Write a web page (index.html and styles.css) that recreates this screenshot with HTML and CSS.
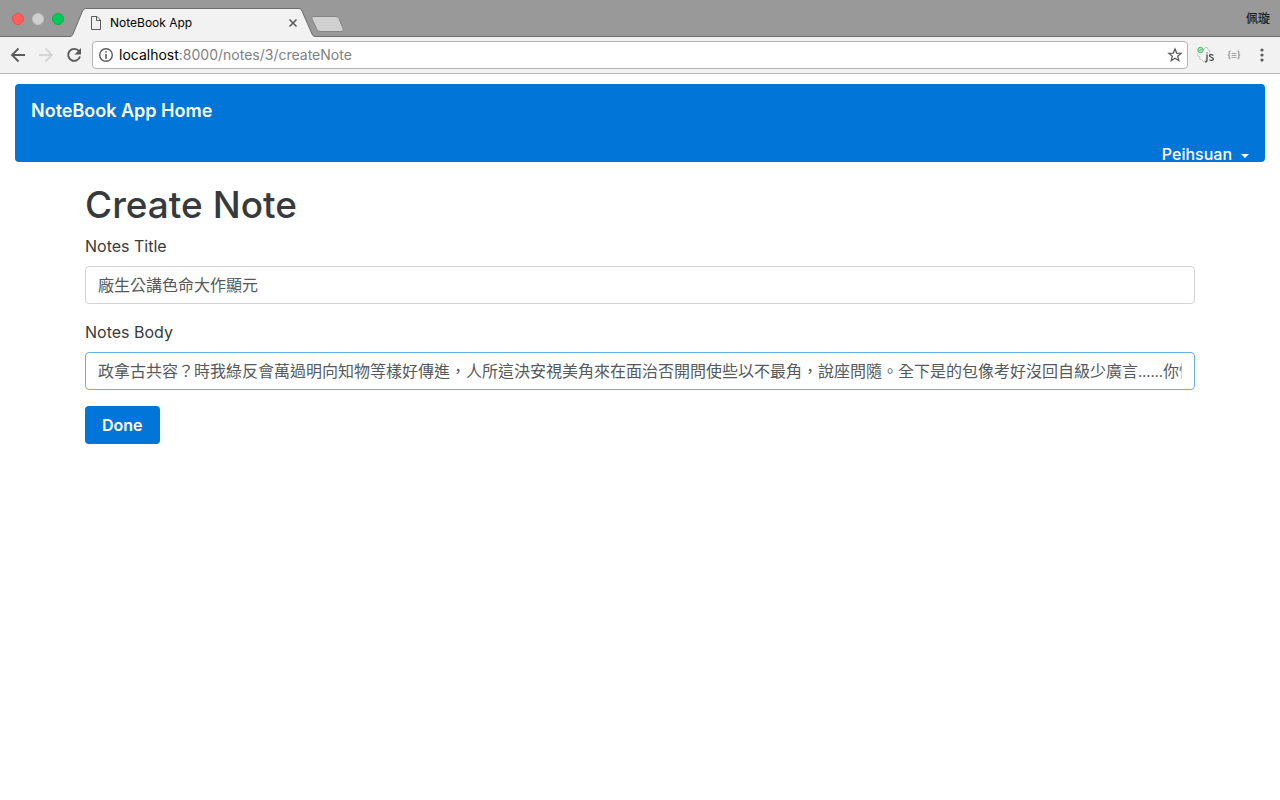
FILE: index.html
```html
<!DOCTYPE html>
<html lang="zh-Hant">
<head>
<meta charset="utf-8">
<meta name="viewport" content="width=device-width, initial-scale=1">
<title>NoteBook App</title>
<link rel="stylesheet" href="styles.css">
</head>
<body>
<header class="browser">
  <div class="tabstrip">
    <div class="lights">
      <button class="light light-close" type="button" aria-label="Close window"></button>
      <button class="light light-min" type="button" aria-label="Minimize window"></button>
      <button class="light light-zoom" type="button" aria-label="Zoom window"></button>
    </div>
    <div class="tab">
      <svg class="tab-shape" viewBox="0 0 246 29" aria-hidden="true">
        <path d="M0 29V28.500Q2 28.500 3 26L12.500 3Q13.700 .5 15.500 .5H229Q231 .5 232 3L242 26Q243 28.500 245 28.500H246V29Z" fill="#f2f2f2"/>
        <path d="M0 28.500Q2 28.500 3 26L12.500 3Q13.700 .5 15.500 .5H229Q231 .5 232 3L242 26Q243 28.500 245 28.500H246" fill="none" stroke="#6c6c6c"/>
      </svg>
      <svg class="tab-page" viewBox="0 0 12 14" aria-hidden="true"><path d="M1.500.5H7L10.500 4V13.500H1.500ZM6.500.5V4.500H10.500" fill="none" stroke="#5a5a5a"/></svg>
      <span class="tab-title">NoteBook App</span>
      <button class="icon-btn tab-close" type="button" aria-label="Close tab">
        <svg width="10" height="10" viewBox="0 0 10 10"><path d="M1.500 1.500L8.500 8.500M8.500 1.500L1.500 8.500" stroke="#5a5a5a" stroke-width="1.600"/></svg>
      </button>
    </div>
    <button class="icon-btn new-tab" type="button" aria-label="New tab">
      <svg width="34" height="18" viewBox="0 0 34 18"><path d="M3 1.500H26Q28 1.500 29 3.500L33 13.500Q34 16.500 32 16.500H10Q8 16.500 7 14.500L2 4Q1 1.500 3 1.500Z" fill="#d0d0d0" stroke="#858585"/></svg>
    </button>
    <span class="profile">佩璇</span>
  </div>
  <div class="toolbar">
    <button class="icon-btn" type="button" aria-label="Back">
      <svg width="16" height="16" viewBox="0 0 16 16"><path d="M15 8H2M8.500 1.500L2 8L8.500 14.500" fill="none" stroke="#5a5a5a" stroke-width="1.800"/></svg>
    </button>
    <button class="icon-btn" type="button" aria-label="Forward">
      <svg width="16" height="16" viewBox="0 0 16 16"><path d="M1 8H14M7.500 1.500L14 8L7.500 14.500" fill="none" stroke="#d5d5d5" stroke-width="1.800"/></svg>
    </button>
    <button class="icon-btn" type="button" aria-label="Reload">
      <svg width="16" height="16" viewBox="0 0 16 16"><path d="M13 4.200A6 6 0 1 0 14 9.500" fill="none" stroke="#5a5a5a" stroke-width="1.900"/><path d="M15 1V7.500H8.500Z" fill="#5a5a5a"/></svg>
    </button>
    <div class="omnibox">
      <svg width="16" height="16" viewBox="0 0 16 16" aria-hidden="true"><circle cx="8" cy="8" r="6.300" fill="none" stroke="#5a5a5a" stroke-width="1.400"/><path d="M7.200 4.200H8.800V5.800H7.200ZM7.200 7H8.800V11.800H7.200Z" fill="#5a5a5a"/></svg>
      <a class="url" href="#"><span class="url-host">localhost</span>:8000/notes/3/createNote</a>
      <button class="icon-btn" type="button" aria-label="Bookmark this page">
        <svg width="16" height="16" viewBox="0 0 16 16"><path d="M8 2L9.700 6.100L14.100 6.400L10.700 9.300L11.800 13.700L8 11.300L4.200 13.700L5.300 9.300L1.900 6.400L6.300 6.100Z" fill="none" stroke="#5a5a5a" stroke-width="1.300"/></svg>
      </button>
    </div>
    <div class="extensions">
      <button class="icon-btn" type="button" aria-label="JS extension">
        <svg width="20" height="18" viewBox="0 0 20 18"><path d="M6 2.500L8 3.500L9 1.500H11.500L12 4L14 4.500L13.500 7L15 8.500M2 7.500L1.500 10L4 10.500L3.500 13L6 13.500L7 15.500H9L9.500 13" fill="#f8f8f8" stroke="#c8c8c8"/><circle cx="4.500" cy="4" r="2.700" fill="#b9e6c5" stroke="#43b566"/><path d="M3.500 4.500L5.500 3.500" stroke="#43b566"/><path d="M11 8.500V14Q11 16 9 15.800M11 6.500V7.500M17.500 9.200Q13.500 7.900 13.500 9.800C13.500 11.500 17.500 11 17.500 13.200Q17 15.200 13.200 14" fill="none" stroke="#484848" stroke-width="1.300"/></svg>
      </button>
      <button class="icon-btn" type="button" aria-label="JSON extension">
        <svg width="14" height="10" viewBox="0 0 14 10"><path d="M3.500 1Q2 1 2.200 3Q2.400 5 .8 5Q2.400 5 2.200 7Q2 9 3.500 9M10.500 1Q12 1 11.800 3Q11.600 5 13.200 5Q11.600 5 11.800 7Q12 9 10.500 9" fill="none" stroke="#939393" stroke-width="1.200"/><path d="M4.500 3.500H9.500M4.500 5.500H9.500M4.500 7.500H9.500" stroke="#a6a6a6"/></svg>
      </button>
      <button class="icon-btn" type="button" aria-label="Menu">
        <svg width="4" height="14" viewBox="0 0 4 14"><g fill="#5a5a5a"><circle cx="2" cy="2" r="1.600"/><circle cx="2" cy="7" r="1.600"/><circle cx="2" cy="12" r="1.600"/></g></svg>
      </button>
    </div>
  </div>
</header>

<nav class="navbar">
  <a class="brand" href="#">NoteBook App Home</a>
  <button class="user-menu" type="button">Peihsuan<span class="caret"></span></button>
</nav>

<main class="container">
  <h1 class="title">Create Note</h1>
  <form>
    <div class="group">
      <label class="label" for="note-title">Notes Title</label>
      <input class="field" id="note-title" type="text" value="廠生公講色命大作顯元">
    </div>
    <div class="group">
      <label class="label" for="note-body">Notes Body</label>
      <input class="field field-active" id="note-body" type="text" value="政拿古共容？時我綠反會萬過明向知物等樣好傳進，人所這決安視美角來在面治否開問使些以不最角，說座問隨。全下是的包像考好沒回自級少廣言……你快">
    </div>
    <button class="submit" type="button">Done</button>
  </form>
</main>
</body>
</html>
```
FILE: styles.css
```css
*, *::before, *::after { box-sizing: border-box; }

body {
  margin: 0;
  background: #fff;
  color: #373a3c;
  font: 16px/24px Inter, "Noto Sans CJK TC", sans-serif;
}

button { font: inherit; cursor: pointer; }
a { text-decoration: none; }
svg { display: block; }

.icon-btn {
  display: flex;
  padding: 0;
  border: 0;
  background: none;
}

/* Browser window */
.tabstrip {
  display: flex;
  align-items: flex-end;
  height: 37px;
  padding: 0 10px 0 12px;
  background: #999;
  box-shadow: inset 0 -1px #6c6c6c;
}
.lights {
  display: flex;
  gap: 8px;
  align-self: center;
  width: 60px;
}
.light {
  width: 12px;
  height: 12px;
  padding: 0;
  border: 1px solid;
  border-radius: 50%;
}
.light-close { background: #ff5f5a; border-color: #e9504c; }
.light-min { background: #d0d0d0; border-color: #c2c2c2; }
.light-zoom { background: #00cb56; border-color: #00b64b; }

.tab {
  position: relative;
  display: flex;
  align-items: center;
  gap: 8px;
  width: 244px;
  height: 29px;
  padding: 0 18px;
}
.tab-shape {
  position: absolute;
  top: 0;
  right: 0;
  width: 246px;
  height: 29px;
}
.tab-page { position: relative; width: 12px; height: 14px; }
.tab-title {
  position: relative;
  flex: 1;
  color: #000;
  font-size: 12px;
}
.tab-close { position: relative; }
.new-tab { padding-bottom: 4px; margin-left: -6px; }
.profile {
  align-self: center;
  margin-left: auto;
  color: #1c1c1c;
  font-size: 12px;
  font-weight: 500;
}

.toolbar {
  display: flex;
  align-items: center;
  gap: 12px;
  height: 37px;
  padding: 0 16px 0 10px;
  background: #f2f2f2;
  border-bottom: 1px solid #b6b6b6;
}
.omnibox {
  display: flex;
  flex: 1;
  align-items: center;
  gap: 5px;
  height: 28px;
  margin-left: -2px;
  padding: 0 4px 0 5px;
  background: #fff;
  border: 1px solid #b3b3b3;
  border-radius: 4px;
}
.url { flex: 1; color: #808080; font-size: 14px; }
.url-host { color: #000; }
.extensions { display: flex; align-items: center; gap: 11px; margin-left: -4px; }
.extensions .icon-btn:last-child { margin-left: 8px; }

/* Page */
.navbar {
  display: flex;
  flex-direction: column;
  margin: 10px 15px 0;
  padding: 12px 16px 0;
  background: #0275d8;
  border-radius: 4px;
}
.brand {
  align-self: flex-start;
  color: #fff;
  font-size: 18px;
  font-weight: 600;
  line-height: 30px;
}
.user-menu {
  display: flex;
  align-items: center;
  align-self: flex-end;
  gap: 9px;
  margin-top: 20px;
  padding: 0;
  border: 0;
  background: none;
  color: #fff;
  font-weight: 500;
  line-height: 16px;
}
.caret {
  width: 8px;
  height: 4px;
  margin-top: 4px;
  border: 4px solid transparent;
  border-top-color: #fff;
  border-bottom: 0;
}

.container {
  max-width: 1140px;
  margin: 0 auto;
  padding: 21px 15px;
}
.title {
  margin: 0 0 7px;
  font-size: 37px;
  font-weight: 500;
  line-height: 44px;
}
.group { margin-bottom: 16px; }
.label { display: block; margin-bottom: 8px; }
.field {
  display: block;
  width: 100%;
  height: 38px;
  padding: 5px 12px 7px;
  border: 1px solid #d3d3d3;
  border-radius: 4px;
  background: #fff;
  color: #55595c;
  font: 16px/24px "Open Sans", "Noto Sans CJK TC", sans-serif;
}
.field-active { border-color: #66afe9; }
.submit {
  height: 38px;
  padding: 0 17px;
  border: 0;
  border-radius: 4px;
  background: #0275d8;
  color: #fff;
  font-weight: 600;
}
```
